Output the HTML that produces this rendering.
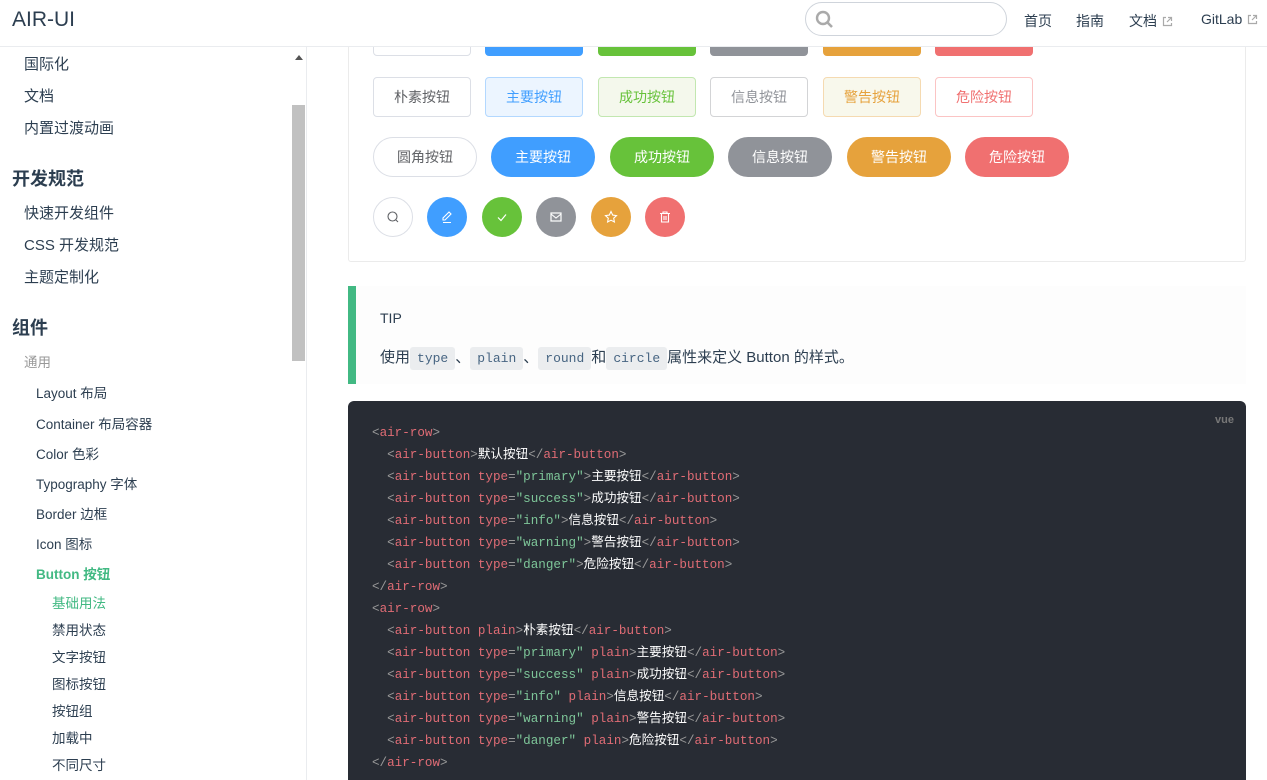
<!DOCTYPE html>
<html style="overflow:hidden;height:780px"><head><meta charset="utf-8"><style>
*{box-sizing:border-box;margin:0;padding:0}
body{width:1267px;height:780px;overflow:hidden;background:#fff;font-family:"Liberation Sans","Noto Sans CJK SC",sans-serif;color:#2c3e50;position:relative}
.hdr{position:absolute;left:0;top:0;width:1267px;height:47px;border-bottom:1px solid #eaecef;background:#fff;z-index:5}
.logo{position:absolute;left:12px;top:8px;font-size:21px;color:#2c3e50}
.search{position:absolute;left:805px;top:2px;width:202px;height:34px;border:1px solid #cfd4db;border-radius:17px}
.nav{position:absolute;top:11px;font-size:14px;color:#2c3e50;white-space:nowrap}
.nav svg{vertical-align:-1px;margin-left:5px}
.side{position:absolute;left:0;top:47px;width:307px;height:733px;border-right:1px solid #eaecef}
.s{position:absolute;white-space:nowrap}
.l1{left:24px;font-size:15px;color:#2c3e50}
.h{left:12px;font-size:18px;font-weight:bold;color:#2c3e50}
.l2{left:36px;font-size:13.5px;color:#2c3e50}
.l3{left:52px;font-size:13.5px;color:#2c3e50}
.demo{position:absolute;left:348px;top:30px;width:898px;height:232px;border:1px solid #ebebeb;border-radius:3px}
.b{position:absolute;height:40px;border-radius:4px;font-size:14px;text-align:center;line-height:38px;border:1px solid #dcdfe6;color:#606266;background:#fff}
.c{position:absolute;width:40px;height:40px;border-radius:50%;top:197px;display:flex;align-items:center;justify-content:center}
.tip{position:absolute;left:348px;top:286px;width:898px;height:98px;border-left:8px solid #42b983;background:#fdfdfd}
code{font-family:"Liberation Mono",monospace;font-size:13px;background:#ebedef;color:#476582;padding:4px 7px;border-radius:3px}
.code{position:absolute;left:348px;top:401px;width:898px;height:379px;overflow:hidden;background:#282c34;border-radius:6px 6px 0 0;padding:21px 24px;font-family:"Liberation Mono","Noto Sans CJK SC",monospace;font-size:12.6px;line-height:22px;color:#fff;white-space:pre}
.t{color:#e06c75}.p{color:#999}.a{color:#e06c75}.v{color:#7ec699}
</style></head><body>
<div class="hdr">
<div class="logo">AIR-UI</div>
<div class="search"><svg width="20" height="20" viewBox="0 0 20 20" style="position:absolute;left:9px;top:7px"><circle cx="8" cy="8" r="6" fill="none" stroke="#aaa" stroke-width="2.4"/><line x1="12.5" y1="12.5" x2="17" y2="17" stroke="#aaa" stroke-width="2.6"/></svg></div>
<div class="nav" style="left:1024px">首页</div>
<div class="nav" style="left:1076px">指南</div>
<div class="nav" style="left:1129px">文档<svg width="11" height="11" viewBox="0 0 11 11"><path d="M4 1.5H1.5v8h8V7M6 1.5h3.5V5M9.5 1.5L5 6" fill="none" stroke="#aaa" stroke-width="1.2"/></svg></div>
<div class="nav" style="left:1201px">GitLab<svg width="11" height="11" viewBox="0 0 11 11"><path d="M4 1.5H1.5v8h8V7M6 1.5h3.5V5M9.5 1.5L5 6" fill="none" stroke="#aaa" stroke-width="1.2"/></svg></div>
</div>
<div class="side">
<div style="position:absolute;left:295px;top:8px;width:0;height:0;border-left:4px solid transparent;border-right:4px solid transparent;border-bottom:5px solid #555"></div>
<div style="position:absolute;left:292px;top:58px;width:13px;height:256px;background:#c1c1c1"></div>
<div class="s l1" style="top:6px">国际化</div>
<div class="s l1" style="top:38px">文档</div>
<div class="s l1" style="top:70px">内置过渡动画</div>
<div class="s h" style="top:118px">开发规范</div>
<div class="s l1" style="top:155px">快速开发组件</div>
<div class="s l1" style="top:187px">CSS 开发规范</div>
<div class="s l1" style="top:219px">主题定制化</div>
<div class="s h" style="top:267px">组件</div>
<div class="s" style="left:24px;top:304px;font-size:13.5px;color:#999">通用</div>
<div class="s l2" style="top:335px">Layout 布局</div>
<div class="s l2" style="top:366px">Container 布局容器</div>
<div class="s l2" style="top:396px">Color 色彩</div>
<div class="s l2" style="top:426px">Typography 字体</div>
<div class="s l2" style="top:456px">Border 边框</div>
<div class="s l2" style="top:486px">Icon 图标</div>
<div class="s l2" style="top:516px;color:#42b983;font-weight:bold">Button 按钮</div>
<div class="s l3" style="top:545px;color:#42b983">基础用法</div>
<div class="s l3" style="top:572px">禁用状态</div>
<div class="s l3" style="top:599px">文字按钮</div>
<div class="s l3" style="top:626px">图标按钮</div>
<div class="s l3" style="top:653px">按钮组</div>
<div class="s l3" style="top:680px">加载中</div>
<div class="s l3" style="top:707px">不同尺寸</div>
</div>
<div class="demo"></div>
<div class="b" style="left:373px;top:16px;width:98px"></div>
<div class="b" style="left:485px;top:16px;width:98px;background:#409eff;border-color:#409eff"></div>
<div class="b" style="left:598px;top:16px;width:98px;background:#67c23a;border-color:#67c23a"></div>
<div class="b" style="left:710px;top:16px;width:98px;background:#909399;border-color:#909399"></div>
<div class="b" style="left:823px;top:16px;width:98px;background:#e6a23c;border-color:#e6a23c"></div>
<div class="b" style="left:935px;top:16px;width:98px;background:#f07070;border-color:#f07070"></div>
<div class="hdr" style="height:47px;background:#fff;z-index:4"></div>
<div class="b" style="left:373px;top:77px;width:98px">朴素按钮</div>
<div class="b" style="left:485px;top:77px;width:98px;color:#409eff;background:#ecf5ff;border-color:#b3d8ff">主要按钮</div>
<div class="b" style="left:598px;top:77px;width:98px;color:#67c23a;background:#f4f8ec;border-color:#c2e7b0">成功按钮</div>
<div class="b" style="left:710px;top:77px;width:98px;color:#909399;background:#fff;border-color:#d3d4d6">信息按钮</div>
<div class="b" style="left:823px;top:77px;width:98px;color:#e6a23c;background:#f8f8ec;border-color:#f5dab1">警告按钮</div>
<div class="b" style="left:935px;top:77px;width:98px;color:#f07070;background:#fff;border-color:#fbc4c4">危险按钮</div>
<div class="b" style="left:373px;top:137px;width:104px;border-radius:20px">圆角按钮</div>
<div class="b" style="left:491px;top:137px;width:104px;border-radius:20px;color:#fff;background:#409eff;border-color:#409eff">主要按钮</div>
<div class="b" style="left:610px;top:137px;width:104px;border-radius:20px;color:#fff;background:#67c23a;border-color:#67c23a">成功按钮</div>
<div class="b" style="left:728px;top:137px;width:104px;border-radius:20px;color:#fff;background:#909399;border-color:#909399">信息按钮</div>
<div class="b" style="left:847px;top:137px;width:104px;border-radius:20px;color:#fff;background:#e6a23c;border-color:#e6a23c">警告按钮</div>
<div class="b" style="left:965px;top:137px;width:104px;border-radius:20px;color:#fff;background:#f07070;border-color:#f07070">危险按钮</div>
<div class="c" style="left:373px;border:1px solid #dcdfe6"><svg width="14" height="14" viewBox="0 0 14 14"><circle cx="6.5" cy="6.5" r="4.5" fill="none" stroke="#606266" stroke-width="1.1"/><line x1="10" y1="10" x2="12" y2="12" stroke="#606266" stroke-width="1.1"/></svg></div>
<div class="c" style="left:427px;background:#409eff"><svg width="14" height="14" viewBox="0 0 14 14"><path d="M9 2l2 2-6 6H3V8z M3 12.5h8" fill="none" stroke="#fff" stroke-width="1.1"/></svg></div>
<div class="c" style="left:482px;background:#67c23a"><svg width="14" height="14" viewBox="0 0 14 14"><path d="M3 7.5l3 3 5-6" fill="none" stroke="#fff" stroke-width="1.2"/></svg></div>
<div class="c" style="left:536px;background:#909399"><svg width="14" height="14" viewBox="0 0 14 14"><rect x="2" y="3" width="10" height="8" fill="none" stroke="#fff" stroke-width="1.2"/><path d="M2 4l5 4 5-4" fill="none" stroke="#fff" stroke-width="1.1"/></svg></div>
<div class="c" style="left:591px;background:#e6a23c"><svg width="14" height="14" viewBox="0 0 14 14"><path d="M7 1.5l1.7 3.6 3.8.5-2.8 2.6.7 3.8L7 10.2 3.6 12l.7-3.8L1.5 5.6l3.8-.5z" fill="none" stroke="#fff" stroke-width="1.1"/></svg></div>
<div class="c" style="left:645px;background:#f07070"><svg width="14" height="14" viewBox="0 0 14 14"><path d="M2 3.5h10M5 3.5V2h4v1.5M3.5 3.5v8.5h7V3.5M6 6v4M8 6v4" fill="none" stroke="#fff" stroke-width="1.1"/></svg></div>
<div class="tip">
<div style="position:absolute;left:24px;top:24px;font-size:14px">TIP</div>
<div style="position:absolute;left:24px;top:60px;font-size:15px;white-space:nowrap">使用<code>type</code>、<code>plain</code>、<code>round</code>和<code>circle</code>属性来定义 Button 的样式。</div>
</div>
<div class="code"><div style="position:absolute;right:12px;top:12px;font-size:11px;color:#777;font-family:'Liberation Sans',sans-serif;line-height:14px;font-weight:bold">vue</div><span class="p">&lt;</span><span class="t">air-row</span><span class="p">&gt;</span>
  <span class="p">&lt;</span><span class="t">air-button</span><span class="p">&gt;</span>默认按钮<span class="p">&lt;/</span><span class="t">air-button</span><span class="p">&gt;</span>
  <span class="p">&lt;</span><span class="t">air-button</span> <span class="a">type</span><span class="p">=</span><span class="v">"primary"</span><span class="p">&gt;</span>主要按钮<span class="p">&lt;/</span><span class="t">air-button</span><span class="p">&gt;</span>
  <span class="p">&lt;</span><span class="t">air-button</span> <span class="a">type</span><span class="p">=</span><span class="v">"success"</span><span class="p">&gt;</span>成功按钮<span class="p">&lt;/</span><span class="t">air-button</span><span class="p">&gt;</span>
  <span class="p">&lt;</span><span class="t">air-button</span> <span class="a">type</span><span class="p">=</span><span class="v">"info"</span><span class="p">&gt;</span>信息按钮<span class="p">&lt;/</span><span class="t">air-button</span><span class="p">&gt;</span>
  <span class="p">&lt;</span><span class="t">air-button</span> <span class="a">type</span><span class="p">=</span><span class="v">"warning"</span><span class="p">&gt;</span>警告按钮<span class="p">&lt;/</span><span class="t">air-button</span><span class="p">&gt;</span>
  <span class="p">&lt;</span><span class="t">air-button</span> <span class="a">type</span><span class="p">=</span><span class="v">"danger"</span><span class="p">&gt;</span>危险按钮<span class="p">&lt;/</span><span class="t">air-button</span><span class="p">&gt;</span>
<span class="p">&lt;/</span><span class="t">air-row</span><span class="p">&gt;</span>
<span class="p">&lt;</span><span class="t">air-row</span><span class="p">&gt;</span>
  <span class="p">&lt;</span><span class="t">air-button</span> <span class="a">plain</span><span class="p">&gt;</span>朴素按钮<span class="p">&lt;/</span><span class="t">air-button</span><span class="p">&gt;</span>
  <span class="p">&lt;</span><span class="t">air-button</span> <span class="a">type</span><span class="p">=</span><span class="v">"primary"</span> <span class="a">plain</span><span class="p">&gt;</span>主要按钮<span class="p">&lt;/</span><span class="t">air-button</span><span class="p">&gt;</span>
  <span class="p">&lt;</span><span class="t">air-button</span> <span class="a">type</span><span class="p">=</span><span class="v">"success"</span> <span class="a">plain</span><span class="p">&gt;</span>成功按钮<span class="p">&lt;/</span><span class="t">air-button</span><span class="p">&gt;</span>
  <span class="p">&lt;</span><span class="t">air-button</span> <span class="a">type</span><span class="p">=</span><span class="v">"info"</span> <span class="a">plain</span><span class="p">&gt;</span>信息按钮<span class="p">&lt;/</span><span class="t">air-button</span><span class="p">&gt;</span>
  <span class="p">&lt;</span><span class="t">air-button</span> <span class="a">type</span><span class="p">=</span><span class="v">"warning"</span> <span class="a">plain</span><span class="p">&gt;</span>警告按钮<span class="p">&lt;/</span><span class="t">air-button</span><span class="p">&gt;</span>
  <span class="p">&lt;</span><span class="t">air-button</span> <span class="a">type</span><span class="p">=</span><span class="v">"danger"</span> <span class="a">plain</span><span class="p">&gt;</span>危险按钮<span class="p">&lt;/</span><span class="t">air-button</span><span class="p">&gt;</span>
<span class="p">&lt;/</span><span class="t">air-row</span><span class="p">&gt;</span></div>
</body></html>
